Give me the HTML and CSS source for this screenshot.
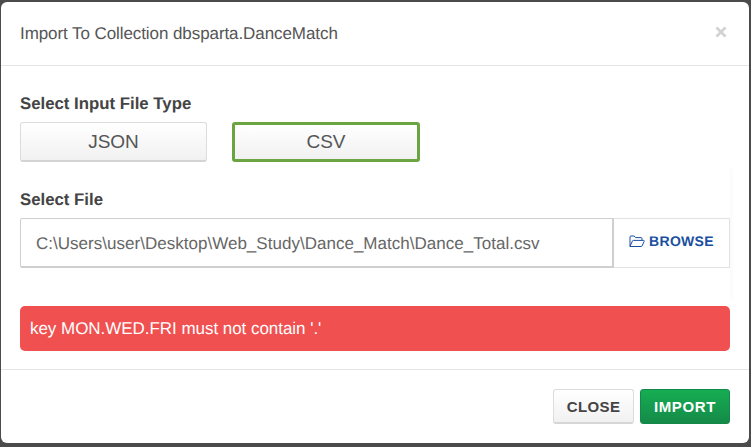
FILE: index.html
```html
<!DOCTYPE html>
<html lang="en">
<head>
<meta charset="utf-8">
<title>Import To Collection</title>
<link rel="stylesheet" href="styles.css">
</head>
<body>
<div class="modal">
  <header class="modal-header">
    <h4 class="modal-title">Import To Collection dbsparta.DanceMatch</h4>
    <svg class="close-x" viewBox="0 0 12 12" width="12" height="12" aria-hidden="true"><path d="M1.5 1.5 10.5 10.5M10.5 1.5 1.5 10.5" stroke="#d2d2d2" stroke-width="2.6" fill="none"/></svg>
  </header>
  <div class="modal-body">
    <div class="label type-label">Select Input File Type</div>
    <div class="type-row">
      <button class="type-btn">JSON</button>
      <button class="type-btn active">CSV</button>
    </div>
    <div class="file-panel">
      <div class="label file-label">Select File</div>
      <div class="file-row">
        <div class="file-input">C:\Users\user\Desktop\Web_Study\Dance_Match\Dance_Total.csv</div>
        <div class="browse">
          <svg class="folder" viewBox="0 0 16 13" width="16" height="13" aria-hidden="true"><path d="M1 11.5V2a1 1 0 0 1 1-1h3.2l1.4 1.6H12a1 1 0 0 1 1 1V5.400M1 11.500 3.400 6a1 1 0 0 1 .9-.6H14.500a.7.7 0 0 1 .6 1L13 11a1 1 0 0 1-.9.5Z" fill="none" stroke="#1a4fa0" stroke-width="1"/></svg>
          <span>BROWSE</span>
        </div>
      </div>
    </div>
    <div class="alert">key MON.WED.FRI must not contain '.'</div>
  </div>
  <footer class="modal-footer">
    <button class="foot-btn close-btn">CLOSE</button>
    <button class="foot-btn import-btn">IMPORT</button>
  </footer>
</div>
</body>
</html>
```
FILE: styles.css
```css
* { box-sizing: border-box; }
html, body { margin: 0; height: 100%; }
body {
  width: 751px;
  height: 447px;
  overflow: hidden;
  background: #4b4b4b;
  padding: 2px 2px 0 1px;
  font-family: "Liberation Sans", Arial, sans-serif;
  color: #444;
  text-rendering: geometricPrecision;
}
.modal {
  width: 748px;
  height: 441px;
  background: #fff;
  border-radius: 6px;
  display: flex;
  flex-direction: column;
}
.modal-header {
  height: 64px;
  flex: none;
  border-bottom: 1px solid #e5e5e5;
  padding: 0 19px;
  display: flex;
  align-items: center;
  justify-content: space-between;
}
.modal-title {
  margin: 0;
  font-size: 17px;
  font-weight: 400;
  color: #555;
  letter-spacing: -.08px;
}
.close-x { margin-top: -3px; margin-right: 3px; }
.modal-body {
  flex: 1;
  padding: 0 19px;
  display: flex;
  flex-direction: column;
}
.label {
  font-size: 16.8px;
  font-weight: 700;
  color: #444;
  line-height: 18px;
}
.type-label { margin-top: 29px; }
.type-row {
  display: flex;
  gap: 25px;
  margin-top: 9px;
}
.type-btn {
  width: 187px;
  height: 40px;
  border: 1px solid #dcdcdc;
  border-bottom: 2px solid #d4d4d4;
  border-radius: 3px;
  background: linear-gradient(#ffffff, #f1f1f1);
  font: 19px "Liberation Sans", Arial, sans-serif;
  color: #555;
  padding: 0;
}
.type-btn.active { width: 188px; border: 3px solid #6ba542; }
.file-panel {
  margin-top: 6px;
  height: 132px;
  padding-top: 23px;
  box-shadow: 0 0 6px rgba(0,0,0,.05);
  clip-path: inset(0 -6px 0 0);
}
.file-label { line-height: 18px; }
.file-row { display: flex; height: 50px; margin-top: 9px; }
.file-input {
  width: 594px;
  border: 1px solid #cfcfcf;
  border-right-width: 2px;
  border-bottom-width: 2px;
  border-radius: 2px 0 0 2px;
  padding: 3px 0 0 15px;
  display: flex;
  align-items: center;
  font-size: 17px;
  letter-spacing: .02px;
  color: #666;
}
.browse {
  width: 116px;
  border: 1px solid #e2e2e2;
  border-left: 0;
  display: flex;
  align-items: center;
  justify-content: center;
  gap: 4px;
  font-size: 14px;
  font-weight: 700;
  color: #1a4fa0;
  letter-spacing: .3px;
  padding-bottom: 4px;
}
.alert {
  height: 45px;
  margin-top: 6px;
  background: #f15050;
  border-radius: 5px;
  color: #fff;
  font-size: 17px;
  letter-spacing: -.04px;
  display: flex;
  align-items: center;
  padding-left: 10px;
  flex: none;
}
.modal-footer {
  height: 74px;
  flex: none;
  border-top: 1px solid #e5e5e5;
  padding: 19px 19px 0 0;
  display: flex;
  justify-content: flex-end;
  align-items: flex-start;
  gap: 6px;
}
.foot-btn {
  height: 35px;
  border-radius: 3px;
  font: 700 15px "Liberation Sans", Arial, sans-serif;
  letter-spacing: .4px;
  padding: 0;
}
.close-btn {
  width: 81px;
  border: 1px solid #dcdcdc;
  border-bottom: 2px solid #d6d6d6;
  background: linear-gradient(#ffffff, #f1f1f1);
  color: #444;
}
.import-btn {
  width: 90px;
  border: 1px solid #14874a;
  background: linear-gradient(#16ad53, #158a48);
  color: #fff;
  letter-spacing: .65px;
}
```
